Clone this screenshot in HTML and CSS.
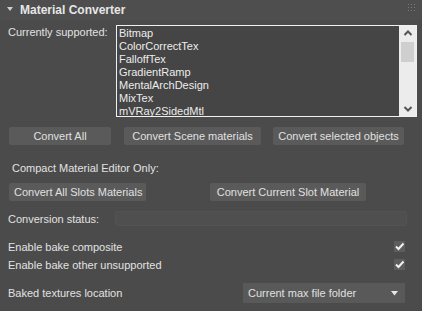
FILE: index.html
```html
<!DOCTYPE html>
<html>
<head>
<meta charset="utf-8">
<link rel="stylesheet" href="styles.css">
</head>
<body>
<div class="panel">
  <div class="header">
    <span class="tri"></span>
    <span class="title">Material Converter</span>
    <svg class="grip" width="7" height="7" viewBox="0 0 7 7"><g fill="#7a7a7a"><rect x="0" y="0" width="1" height="1"/><rect x="3" y="0" width="1" height="1"/><rect x="6" y="0" width="1" height="1"/><rect x="0" y="3" width="1" height="1"/><rect x="3" y="3" width="1" height="1"/><rect x="6" y="3" width="1" height="1"/><rect x="0" y="6" width="1" height="1"/><rect x="3" y="6" width="1" height="1"/><rect x="6" y="6" width="1" height="1"/></g></svg>
  </div>
  <div class="row-supported">
    <div class="label-supported">Currently supported:</div>
    <div class="listbox">
      <div class="items">
        <div>Bitmap</div>
        <div>ColorCorrectTex</div>
        <div>FalloffTex</div>
        <div>GradientRamp</div>
        <div>MentalArchDesign</div>
        <div>MixTex</div>
        <div>mVRay2SidedMtl</div>
      </div>
      <div class="scrollbar">
        <svg class="arrow" width="16" height="14" viewBox="0 0 16 14"><path d="M4.5 9 L8 5.5 L11.5 9" fill="none" stroke="#555" stroke-width="2"/></svg>
        <div class="thumb"></div>
        <div class="track"></div>
        <svg class="arrow" width="16" height="14" viewBox="0 0 16 14"><path d="M4.5 5 L8 8.5 L11.5 5" fill="none" stroke="#555" stroke-width="2"/></svg>
      </div>
    </div>
  </div>
  <div class="btn-row row1">
    <div class="btn w-all">Convert All</div>
    <div class="btn w-scene">Convert Scene materials</div>
    <div class="btn w-sel">Convert selected objects</div>
  </div>
  <div class="compact">Compact Material Editor Only:</div>
  <div class="btn-row row2">
    <div class="btn w-slots">Convert All Slots Materials</div>
    <div class="btn w-cur">Convert Current Slot Material</div>
  </div>
  <div class="status-row">
    <div class="label-status">Conversion status:</div>
    <div class="statusbar"></div>
  </div>
  <div class="check-row first">
    <span>Enable bake composite</span>
    <span class="check"><svg width="11" height="11" viewBox="0 0 11 11"><path d="M2 5.5 L4.5 8 L9.5 2.5" fill="none" stroke="#f2f2f2" stroke-width="2"/></svg></span>
  </div>
  <div class="check-row second">
    <span>Enable bake other unsupported</span>
    <span class="check"><svg width="11" height="11" viewBox="0 0 11 11"><path d="M2 5.5 L4.5 8 L9.5 2.5" fill="none" stroke="#f2f2f2" stroke-width="2"/></svg></span>
  </div>
  <div class="baked-row">
    <span>Baked textures location</span>
    <div class="dropdown">
      <span>Current max file folder</span>
      <svg width="7" height="5" viewBox="0 0 7 5"><path d="M0 0 L7 0 L3.5 4.5 Z" fill="#e6e6e6"/></svg>
    </div>
  </div>
</div>
</body>
</html>
```

FILE: styles.css
```css
html, body {
  margin: 0;
  padding: 0;
  background: #4b4b4b;
}
body {
  width: 422px;
  height: 311px;
  overflow: hidden;
  font-family: "Liberation Sans", Arial, sans-serif;
  font-size: 11px;
  color: #e2e2e2;
}
.panel {
  width: 422px;
  height: 311px;
  display: flex;
  flex-direction: column;
}
.header {
  height: 20px;
  display: flex;
  align-items: center;
  padding-left: 7px;
  padding-right: 7px;
  background: #4e4e4e;
}
.tri {
  width: 0;
  height: 0;
  border-left: 3px solid transparent;
  border-right: 3px solid transparent;
  border-top: 4px solid #cfcfcf;
  margin-right: 7px;
  margin-top: -2px;
}
.title {
  font-weight: bold;
  font-size: 12px;
  color: #e6e6e6;
  flex: 1;
}
.grip {
  margin-top: -6px;
}
.row-supported {
  display: flex;
  margin-top: 5px;
  height: 92px;
}
.label-supported {
  width: 116px;
  padding-left: 8px;
  padding-top: 1px;
  box-sizing: border-box;
  line-height: 13px;
}
.listbox {
  width: 301px;
  height: 92px;
  box-sizing: border-box;
  border: 1px solid #f0f0f0;
  background: #454545;
  display: flex;
}
.items {
  flex: 1;
  padding-left: 2px;
  padding-top: 1px;
  line-height: 13px;
  color: #ececec;
  overflow: hidden;
}
.scrollbar {
  width: 17px;
  background: #ececec;
  display: flex;
  flex-direction: column;
  align-items: center;
}
.arrow {
  flex: none;
}
.thumb {
  width: 13px;
  height: 20px;
  background: #cfcfcf;
  margin-top: 2px;
}
.track {
  flex: 1;
}
.btn-row {
  display: flex;
  padding-left: 9px;
}
.row1 {
  margin-top: 10px;
  gap: 12px;
}
.row2 {
  margin-top: 7px;
  gap: 64px;
}
.btn {
  height: 18px;
  line-height: 18px;
  text-align: center;
  background: #5a5a5a;
  border-radius: 2px;
  color: #e0e0e0;
  box-sizing: border-box;
}
.w-all { width: 102px; }
.w-scene { width: 137px; margin-left: 1px; }
.w-sel { width: 131px; }
.w-slots { width: 137px; text-align: left; padding-left: 5px; }
.w-cur { width: 156px; }
.compact {
  margin-top: 16px;
  padding-left: 12px;
  line-height: 15px;
}
.status-row {
  display: flex;
  align-items: center;
  margin-top: 10px;
  height: 15px;
}
.label-status {
  width: 115px;
  padding-left: 8px;
  box-sizing: border-box;
}
.statusbar {
  width: 292px;
  height: 15px;
  box-sizing: border-box;
  background: #4f4f4f;
  border: 1px solid #535353;
  border-radius: 2px;
}
.check-row {
  display: flex;
  align-items: center;
  justify-content: space-between;
  padding-left: 8px;
  padding-right: 17px;
  height: 13px;
}
.check-row.first {
  margin-top: 14px;
}
.check-row.second {
  margin-top: 5px;
}
.check {
  width: 11px;
  height: 11px;
  background: #5d5d5d;
  display: flex;
}
.baked-row {
  display: flex;
  align-items: center;
  justify-content: space-between;
  padding-left: 8px;
  padding-right: 17px;
  margin-top: 12px;
  height: 20px;
}
.dropdown {
  width: 162px;
  height: 20px;
  box-sizing: border-box;
  background: #595959;
  display: flex;
  align-items: center;
  justify-content: space-between;
  padding-left: 5px;
  padding-right: 7px;
  color: #e0e0e0;
}
```
